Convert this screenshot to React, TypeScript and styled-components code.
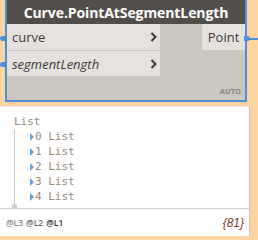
import styled, { createGlobalStyle } from "styled-components";

const Global = createGlobalStyle`
  html, body {
    margin: 0;
    padding: 0;
    background: #fdd4a2;
  }
  body {
    width: 258px;
    height: 240px;
    overflow: hidden;
    font-family: "Open Sans", "Noto Sans", sans-serif;
  }
`;

const Page = styled.div`
  position: relative;
  width: 258px;
  height: 240px;
  display: flex;
  flex-direction: column;
`;

const Node = styled.div`
  position: relative;
  margin: -2px 0 0 5px;
  width: 242px;
  height: 104px;
  box-sizing: border-box;
  border: 2px solid #4a8fd8;
  background: #cbc7c0;
  display: flex;
  flex-direction: column;
`;

const Header = styled.div`
  height: 24px;
  background: #524e4a;
  color: #fff;
  font-weight: 700;
  font-size: 14px;
  display: flex;
  align-items: center;
  justify-content: center;
  letter-spacing: -0.1px;
`;

const Body = styled.div`
  flex: 1;
  position: relative;
  display: flex;
  justify-content: space-between;
  align-items: flex-start;
`;

const Inputs = styled.div`
  width: 153px;
  display: flex;
  flex-direction: column;
  gap: 1px;
  background: #cbc7c0;
`;

const Port = styled.div<{ $italic?: boolean; $h: number }>`
  height: ${(p) => p.$h}px;
  background: #e5e2dd;
  display: flex;
  align-items: center;
  justify-content: space-between;
  padding: 0 3px 0 5px;
  font-size: 13px;
  color: #3a3a3a;
  font-style: ${(p) => (p.$italic ? "italic" : "normal")};
`;

const Output = styled.div`
  height: 26px;
  width: 43px;
  background: #e5e2dd;
  display: flex;
  align-items: center;
  justify-content: center;
  font-size: 13px;
  color: #3a3a3a;
`;

const Auto = styled.div`
  position: absolute;
  right: 4px;
  bottom: 4px;
  font-size: 7.5px;
  font-weight: 700;
  color: #8a857e;
`;

const Connector = styled.div<{ $top: number; $side: "left" | "right" }>`
  position: absolute;
  top: ${(p) => p.$top}px;
  ${(p) => (p.$side === "left" ? "left: 0;" : "left: 244px;")}
  width: ${(p) => (p.$side === "left" ? 5 : 6)}px;
  height: 5px;
  background: #4a8fd8;
  border-radius: ${(p) => (p.$side === "left" ? "3px 0 0 3px" : "0 3px 3px 0")};
`;

const Wire = styled.div`
  position: absolute;
  top: 38px;
  left: 247px;
  width: 11px;
  height: 2px;
  background: #4a8fd8;
`;

const Panel = styled.div`
  margin-top: 4px;
  width: 250px;
  height: 130px;
  box-sizing: border-box;
  background: #fff;
  border-top: 1px solid #e2e2e2;
  border-right: 1px solid #c6c6c6;
  display: flex;
  flex-direction: column;
`;

const Tree = styled.div`
  flex: 1;
  padding: 7px 0 0 14px;
  font-family: "DejaVu Sans Mono", "Liberation Mono", monospace;
  font-size: 11px;
  color: #9a8c7c;
`;

const Label = styled.div`
  height: 15px;
  line-height: 15px;
`;

const Items = styled.div`
  position: relative;
  padding-left: 15px;
  border-left: 1px solid #c9c9c9;
  padding-bottom: 2px;

  &::after {
    content: "";
    position: absolute;
    left: -3px;
    bottom: -3px;
    width: 5px;
    height: 5px;
    border-radius: 50%;
    background: #c9c9c9;
  }
`;

const Item = styled.div`
  height: 15px;
  display: flex;
  align-items: center;
  white-space: pre;
`;

const Arrow = styled.span`
  width: 0;
  height: 0;
  border-top: 4px solid transparent;
  border-bottom: 4px solid transparent;
  border-left: 4px solid #6aa0d4;
  margin-right: 1px;
`;

const Footer = styled.div`
  height: 27px;
  border-top: 1px solid #d4d4d4;
  display: flex;
  align-items: center;
  justify-content: space-between;
  padding: 0 5px 0 6px;
`;

const Levels = styled.div`
  display: flex;
  gap: 3px;
  font-size: 8.5px;
  font-weight: 600;
`;

const Level = styled.span<{ $c: string }>`
  color: ${(p) => p.$c};
`;

const Count = styled.span`
  font-family: "Liberation Sans", sans-serif;
  font-style: italic;
  font-size: 12px;
  color: #8a3a2a;
`;

const items = ["0", "1", "2", "3", "4"];

export default function App() {
  return (
    <Page>
      <Global />
      <Node>
        <Header>Curve.PointAtSegmentLength</Header>
        <Body>
          <Inputs>
            <Port $h={26}>
              curve
              <Chevron />
            </Port>
            <Port $h={25} $italic>
              segmentLength
              <Chevron />
            </Port>
          </Inputs>
          <Output>Point</Output>
          <Auto>AUTO</Auto>
        </Body>
      </Node>
      <Connector $side="left" $top={36} />
      <Connector $side="left" $top={62} />
      <Connector $side="right" $top={36} />
      <Wire />
      <Panel>
        <Tree>
          <Label>List</Label>
          <Items>
            {items.map((n) => (
              <Item key={n}>
                <Arrow />
                {n} List
              </Item>
            ))}
          </Items>
        </Tree>
        <Footer>
          <Levels>
            <Level $c="#8a8a8a">@L3</Level>
            <Level $c="#6a6a6a">@L2</Level>
            <Level $c="#333">@L1</Level>
          </Levels>
          <Count>{"{81}"}</Count>
        </Footer>
      </Panel>
    </Page>
  );
}

function Chevron() {
  return (
    <svg width="7" height="10" viewBox="0 0 7 10">
      <path d="M1.5 1 L5.5 5 L1.5 9" stroke="#3a3a3a" strokeWidth="2" fill="none" />
    </svg>
  );
}
